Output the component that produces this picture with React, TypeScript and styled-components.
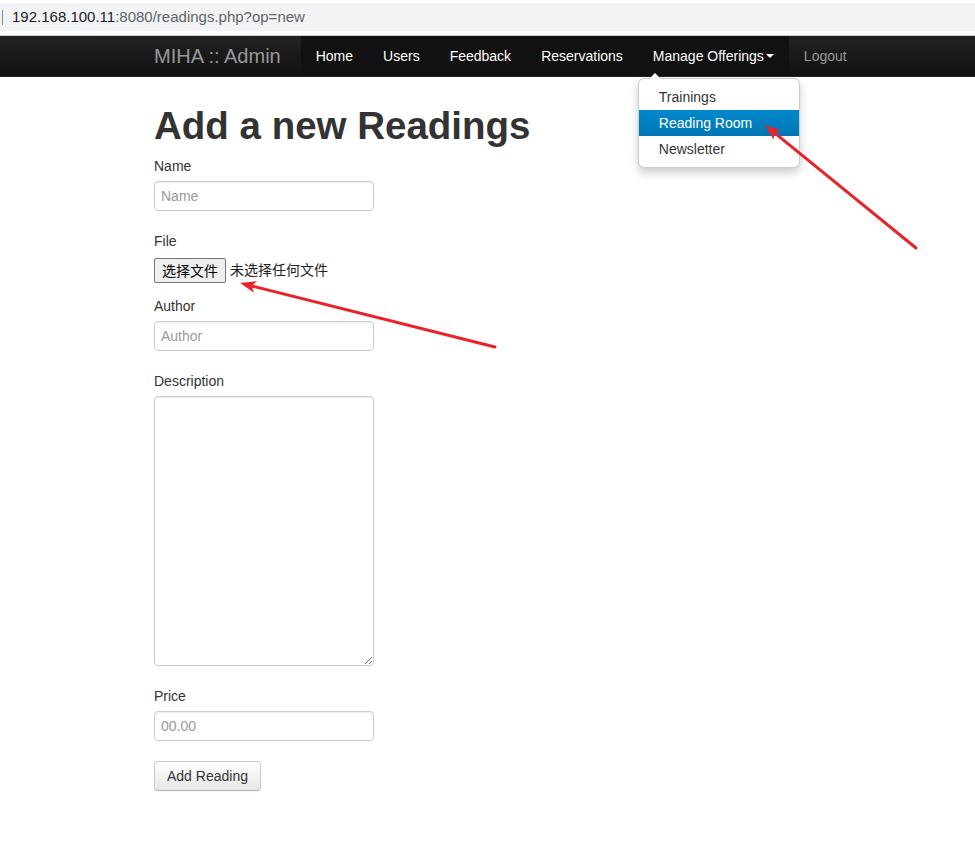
import React from "react";
import styled, { createGlobalStyle } from "styled-components";

const GlobalStyle = createGlobalStyle`
  html, body { margin: 0; padding: 0; background: #fff; }
  body {
    font-family: "Liberation Sans", Arial, "Noto Sans CJK SC", sans-serif;
    font-size: 14px;
    line-height: 20px;
    color: #333;
  }
  * { box-sizing: border-box; }
`;

const Page = styled.div`
  position: relative;
  width: 975px;
  min-height: 843px;
  overflow: hidden;
`;

const BrowserBar = styled.div`
  height: 36px;
  padding-top: 3px;
  background: #fff;
  border-bottom: 1px solid #d0d0d0;
`;

const UrlField = styled.div`
  height: 28px;
  background: #f1f3f4;
  display: flex;
  align-items: center;
  padding-left: 2px;
  font-size: 15px;
  color: #5f6368;
`;

const Cursor = styled.span`
  width: 1px;
  height: 15px;
  background: #8a8a8a;
  margin-right: 9px;
`;

const Host = styled.span`
  color: #202124;
`;

const Navbar = styled.div`
  height: 41px;
  background: linear-gradient(#222, #111);
  border-bottom: 1px solid #252525;
  display: flex;
  padding-left: 134px;
`;

const Brand = styled.a`
  padding: 10px 20px;
  font-size: 20px;
  line-height: 20px;
  color: #999;
  text-decoration: none;
`;

const NavGroup = styled.ul`
  display: flex;
  margin: 0;
  padding: 0;
  list-style: none;
  background: #111;
`;

const NavItem = styled.li`
  position: relative;
`;

const NavLink = styled.a<{ $muted?: boolean }>`
  display: block;
  padding: 10px 15px;
  line-height: 20px;
  color: ${(p) => (p.$muted ? "#999" : "#fff")};
  text-decoration: none;
`;

const Caret = styled.span`
  display: inline-block;
  width: 0;
  height: 0;
  vertical-align: top;
  margin-top: 8px;
  margin-left: 2px;
  border-top: 4px solid #fff;
  border-left: 4px solid transparent;
  border-right: 4px solid transparent;
`;

const Menu = styled.ul`
  position: absolute;
  top: 100%;
  left: 0;
  margin: 2px 0 0;
  padding: 5px 0;
  width: 162px;
  list-style: none;
  background: #fff;
  border: 1px solid rgba(0, 0, 0, 0.2);
  border-radius: 6px;
  box-shadow: 0 5px 10px rgba(0, 0, 0, 0.2);
  z-index: 10;

  &::before {
    content: "";
    position: absolute;
    top: -7px;
    left: 9px;
    border-left: 7px solid transparent;
    border-right: 7px solid transparent;
    border-bottom: 7px solid rgba(0, 0, 0, 0.2);
  }
  &::after {
    content: "";
    position: absolute;
    top: -6px;
    left: 10px;
    border-left: 6px solid transparent;
    border-right: 6px solid transparent;
    border-bottom: 6px solid #fff;
  }
`;

const MenuItem = styled.li<{ $active?: boolean }>`
  padding: 3px 20px;
  line-height: 20px;
  white-space: nowrap;
  color: ${(p) => (p.$active ? "#fff" : "#333")};
  background: ${(p) => (p.$active ? "linear-gradient(#0088cc, #0077b3)" : "transparent")};
`;

const Content = styled.div`
  padding: 19px 0 40px 154px;
`;

const Heading = styled.h1`
  margin: 10px 0;
  font-size: 38.5px;
  line-height: 40px;
  font-weight: bold;
  color: #333;
`;

const FieldLabel = styled.label`
  display: block;
  margin-bottom: 5px;
  color: #333;
`;

const fieldBase = `
  display: block;
  width: 220px;
  padding: 4px 6px;
  font-family: "Liberation Sans", Arial, sans-serif;
  font-size: 14px;
  line-height: 20px;
  color: #555;
  background: #fff;
  border: 1px solid #ccc;
  border-radius: 4px;
  box-shadow: inset 0 1px 1px rgba(0, 0, 0, 0.075);
  margin: 0 0 20px;
  outline: none;
  &::placeholder { color: #999; }
`;

const TextInput = styled.input`
  ${fieldBase}
  height: 30px;
`;

const TextArea = styled.textarea`
  ${fieldBase}
  height: 270px;
  resize: vertical;
`;

const FileRow = styled.div`
  display: flex;
  align-items: flex-start;
  height: 30px;
  padding-top: 2px;
  margin-bottom: 10px;
  font-family: "Liberation Sans", "Noto Sans CJK SC", sans-serif;
`;

const FileButton = styled.button`
  height: 25px;
  padding: 0 7px;
  font-family: "Noto Sans CJK SC", sans-serif;
  font-size: 14px;
  line-height: 23px;
  color: #000;
  background: #efefef;
  border: 1px solid #767676;
  border-radius: 2px;
`;

const FileStatus = styled.span`
  margin-left: 4px;
  font-family: "Noto Sans CJK SC", sans-serif;
  font-size: 14px;
  line-height: 22px;
  color: #222;
`;

const SubmitButton = styled.button`
  display: inline-block;
  height: 30px;
  padding: 4px 12px;
  font-family: "Liberation Sans", Arial, sans-serif;
  font-size: 14px;
  line-height: 20px;
  color: #333;
  background: linear-gradient(#fff, #e6e6e6);
  border: 1px solid #ccc;
  border-bottom-color: #b3b3b3;
  border-radius: 4px;
  box-shadow: inset 0 1px 0 rgba(255, 255, 255, 0.2), 0 1px 2px rgba(0, 0, 0, 0.05);
`;

const Overlay = styled.svg`
  position: absolute;
  top: 0;
  left: 0;
  z-index: 20;
  pointer-events: none;
`;

type Pt = [number, number];

function Arrow({ from, to }: { from: Pt; to: Pt }) {
  const dx = to[0] - from[0];
  const dy = to[1] - from[1];
  const len = Math.hypot(dx, dy);
  const ux = dx / len;
  const uy = dy / len;
  const px = -uy;
  const py = ux;
  const headLen = 16;
  const half = 6;
  const bx = to[0] - ux * headLen;
  const by = to[1] - uy * headLen;
  const nx = to[0] - ux * (headLen - 4);
  const ny = to[1] - uy * (headLen - 4);
  const head = [
    `${to[0]},${to[1]}`,
    `${bx + px * half},${by + py * half}`,
    `${nx},${ny}`,
    `${bx - px * half},${by - py * half}`,
  ].join(" ");
  return (
    <g>
      <line x1={from[0]} y1={from[1]} x2={nx} y2={ny} stroke="#e8232a" strokeWidth={3} strokeLinecap="round" />
      <polygon points={head} fill="#e8232a" />
    </g>
  );
}

export default function App() {
  return (
    <Page>
      <GlobalStyle />
      <BrowserBar>
        <UrlField>
          <Cursor />
          <Host>192.168.100.11</Host>:8080/readings.php?op=new
        </UrlField>
      </BrowserBar>
      <Navbar>
        <Brand>MIHA :: Admin</Brand>
        <NavGroup>
          <NavItem><NavLink>Home</NavLink></NavItem>
          <NavItem><NavLink>Users</NavLink></NavItem>
          <NavItem><NavLink>Feedback</NavLink></NavItem>
          <NavItem><NavLink>Reservations</NavLink></NavItem>
          <NavItem>
            <NavLink>
              Manage Offerings<Caret />
            </NavLink>
            <Menu>
              <MenuItem>Trainings</MenuItem>
              <MenuItem $active>Reading Room</MenuItem>
              <MenuItem>Newsletter</MenuItem>
            </Menu>
          </NavItem>
        </NavGroup>
        <NavLink $muted>Logout</NavLink>
      </Navbar>
      <Content>
        <Heading>Add a new Readings</Heading>
        <FieldLabel>Name</FieldLabel>
        <TextInput placeholder="Name" />
        <FieldLabel>File</FieldLabel>
        <FileRow>
          <FileButton>选择文件</FileButton>
          <FileStatus>未选择任何文件</FileStatus>
        </FileRow>
        <FieldLabel>Author</FieldLabel>
        <TextInput placeholder="Author" />
        <FieldLabel>Description</FieldLabel>
        <TextArea />
        <FieldLabel>Price</FieldLabel>
        <TextInput placeholder="00.00" />
        <SubmitButton>Add Reading</SubmitButton>
      </Content>
      <Overlay width={975} height={843} viewBox="0 0 975 843">
        <Arrow from={[916, 248]} to={[765, 125]} />
        <Arrow from={[495, 347]} to={[240, 283]} />
      </Overlay>
    </Page>
  );
}
